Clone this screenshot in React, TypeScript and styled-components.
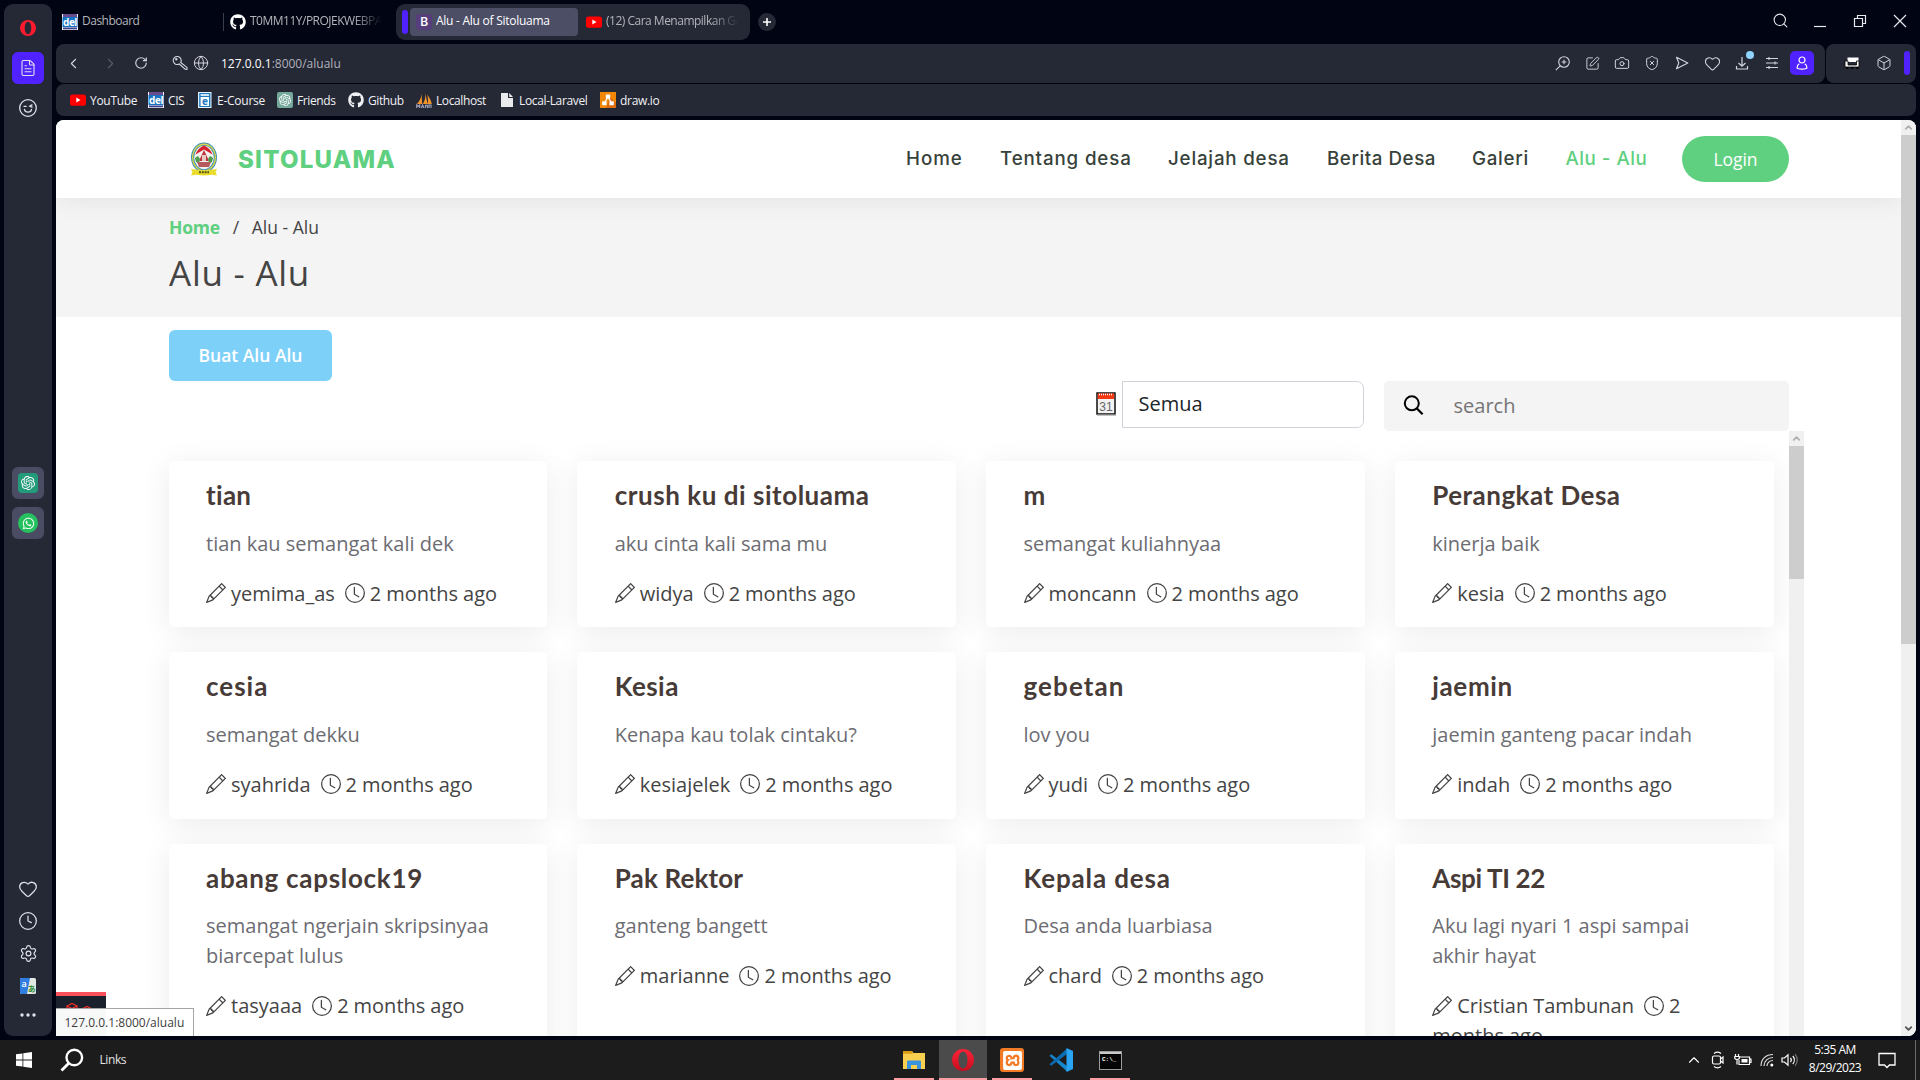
import React from 'react';
import styled, { createGlobalStyle, css } from 'styled-components';
import {
  ChevronLeft, ChevronRight, RotateCw, Globe, Search, Camera, ShieldX,
  Heart, Box, Clock, Settings, FileText, ChevronUp, ChevronDown, SquarePen,
} from 'lucide-react';
import { FaGithub, FaWhatsapp } from 'react-icons/fa';
import { BsPencil, BsClock } from 'react-icons/bs';
import { SiOpenai, SiXampp } from 'react-icons/si';

const UI = '"Open Sans", "Noto Sans", sans-serif';

const Global = createGlobalStyle`
  * { box-sizing: border-box; }
  html, body { margin: 0; padding: 0; background: #010412; }
  body { width: 1920px; height: 1080px; overflow: hidden; font-family: ${UI}; }
  svg { display: block; flex: none; }
`;

const Screen = styled.div`
  width: 1920px;
  height: 1080px;
  display: flex;
  flex-direction: column;
  background: #010412;
`;
const Desktop = styled.div`
  display: flex;
  height: 1040px;
  padding: 0 4px 4px;
`;
const Sidebar = styled.aside`
  width: 48px;
  margin: 4px 4px 0 0;
  border-radius: 9px;
  background: #252835;
  color: #dfe1ea;
  display: flex;
  flex-direction: column;
  align-items: center;
`;
const SideButton = styled.div<{ $top?: number; $bg?: string }>`
  width: 32px;
  height: 32px;
  margin-top: ${(p) => p.$top ?? 0}px;
  border-radius: 6px;
  background: ${(p) => p.$bg ?? 'transparent'};
  display: flex;
  align-items: center;
  justify-content: center;
`;
const AppBadge = styled.div<{ $bg: string; $radius: number }>`
  width: 20px;
  height: 20px;
  border-radius: ${(p) => p.$radius}px;
  background: ${(p) => p.$bg};
  color: #fff;
  display: flex;
  align-items: center;
  justify-content: center;
`;

const Browser = styled.div`
  width: 1860px;
  display: flex;
  flex-direction: column;
`;
const TabStrip = styled.div`
  height: 44px;
  display: flex;
  align-items: center;
  color: #fff;
`;
const Tab = styled.div<{ $width: number; $active?: boolean }>`
  width: ${(p) => p.$width}px;
  flex: none;
  height: 28px;
  padding: 0 6px;
  border-radius: 4px;
  display: flex;
  align-items: center;
  gap: 4px;
  font-size: 12px;
  letter-spacing: -0.5px;
  white-space: nowrap;
  color: #b4b5ba;
  ${(p) => p.$active && css`
    background: #4c4e66;
    color: #fff;
    font-weight: 500;
    letter-spacing: -0.26px;
  `}
`;
const TabText = styled.span<{ $fade?: boolean }>`
  flex: 1;
  overflow: hidden;
  line-height: 18px;
  padding-bottom: 2px;
  ${(p) => p.$fade && css`mask-image: linear-gradient(90deg, #000 78%, transparent 99%);`}
`;
const TabDivider = styled.div`
  width: 1px;
  height: 18px;
  background: #3b3d4b;
`;
const Island = styled.div`
  width: 354px;
  height: 36px;
  margin: 0 8px 0 7px;
  padding: 0 6px;
  border-radius: 9px;
  background: #252835;
  display: flex;
  align-items: center;
  gap: 2px;
`;
const Accent = styled.div`
  width: 6px;
  flex: none;
  height: 24px;
  border-radius: 3px;
  background: #4f22ff;
`;
const NewTab = styled.div`
  width: 18px;
  height: 18px;
  border-radius: 50%;
  background: #252835;
  display: flex;
  align-items: center;
  justify-content: center;
`;
const WindowControls = styled.div`
  margin: 0 -4px 3px auto;
  width: 160px;
  display: grid;
  grid-template-columns: repeat(4, 40px);
  justify-items: center;
  align-items: center;
  color: #e8e8ee;
`;
const ToolRow = styled.div`
  height: 39px;
  display: flex;
  gap: 1px;
  margin-bottom: 1px;
`;
const ToolPanel = styled.div<{ $width: number }>`
  width: ${(p) => p.$width}px;
  border-radius: 8px;
  background: #252835;
  color: #d3d5dd;
  display: flex;
  align-items: center;
  padding-bottom: 1px;
`;
const Slot = styled.div<{ $width: number; $dim?: boolean }>`
  width: ${(p) => p.$width}px;
  flex: none;
  display: flex;
  justify-content: center;
  opacity: ${(p) => (p.$dim ? 0.3 : 1)};
`;
const Url = styled.div`
  margin-left: 9px;
  font-size: 12px;
  color: #b0b2bc;
  b { font-weight: 400; color: #fff; }
`;
const Tools = styled.div`
  margin-left: auto;
  display: flex;
  align-items: center;
  margin-right: 8px;
`;
const Profile = styled.div`
  width: 24px;
  height: 24px;
  border-radius: 5px;
  background: #4f22ff;
  color: #fff;
  display: flex;
  align-items: center;
  justify-content: center;
`;
const Bookmarks = styled.div`
  height: 32px;
  margin-bottom: 4px;
  padding: 0 14px;
  border-radius: 8px;
  background: #252835;
  display: flex;
  align-items: center;
`;
const Bookmark = styled.div<{ $width: number; $track: number }>`
  width: ${(p) => p.$width}px;
  display: flex;
  align-items: center;
  gap: 4px;
  font-size: 12px;
  letter-spacing: ${(p) => p.$track}px;
  white-space: nowrap;
  color: #f0f1f4;
`;

const Viewport = styled.div`
  position: relative;
  height: 916px;
  display: flex;
  background: #fff;
  border-radius: 8px 8px 8px 0;
  overflow: hidden;
`;
const Page = styled.div`
  width: 1845px;
  display: flex;
  flex-direction: column;
  overflow: hidden;
`;
const SiteHeader = styled.header`
  position: relative;
  z-index: 1;
  flex: none;
  height: 78px;
  padding: 0 112px 0 113px;
  background: #fff;
  box-shadow: 0 2px 26px rgba(0, 0, 0, 0.07);
  display: flex;
  align-items: center;
`;
const Brand = styled.div`
  display: flex;
  align-items: center;
  gap: 20px;
  margin-left: 21px;
  font: 800 24px Inter, sans-serif;
  letter-spacing: 1.25px;
  color: #5fcf80;
`;
const Nav = styled.nav`
  margin-left: auto;
  display: flex;
  align-items: center;
  gap: 37.5px;
`;
const NavLink = styled.a<{ $width: number; $track: number; $active?: boolean }>`
  width: ${(p) => p.$width}px;
  font: 450 18.75px/28px Inter, sans-serif;
  letter-spacing: ${(p) => p.$track}px;
  white-space: nowrap;
  color: ${(p) => (p.$active ? '#5fcf80' : '#37423b')};
`;
const LoginButton = styled.button`
  width: 107px;
  height: 46px;
  margin-left: 36px;
  padding: 0 0 1px;
  border: 0;
  border-radius: 23px;
  background: #5fcf80;
  color: #fff;
  font: 450 17.5px/26px ${UI};
  letter-spacing: -0.1px;
`;
const Crumbs = styled.section`
  flex: none;
  height: 119px;
  padding: 16px 0 0 113px;
  background: #f4f4f4;
  color: #444;
`;
const CrumbLine = styled.div`
  display: flex;
  gap: 12.7px;
  font-size: 17.5px;
  line-height: 26px;
`;
const CrumbHome = styled.a`
  color: #5fcf80;
  font-weight: 700;
  letter-spacing: -0.2px;
`;
const PageTitle = styled.h2`
  margin: 12px 0 0;
  font-size: 35px;
  line-height: 42px;
  font-weight: 400;
  letter-spacing: 0.75px;
`;
const CreateButton = styled.button`
  flex: none;
  width: 163px;
  height: 51px;
  margin: 13px 0 0 113px;
  padding: 0 0 2px;
  border: 0;
  border-radius: 6px;
  background: #7dd1f9;
  color: #fff;
  font: 600 17.5px ${UI};
`;
const Filters = styled.div`
  flex: none;
  height: 50px;
  margin-right: 112px;
  display: flex;
  justify-content: flex-end;
  align-items: flex-start;
`;
const CalendarSlot = styled.div`
  margin: 10px 5px 0 0;
`;
const SelectBox = styled.div`
  width: 242px;
  height: 47px;
  padding-left: 15.5px;
  border: 1px solid #ced4da;
  border-radius: 0 7px 7px 0;
  font-size: 20px;
  line-height: 44px;
  color: #212529;
`;
const SearchBox = styled.div`
  width: 405px;
  height: 50px;
  margin-left: 20px;
  padding: 0 0 2px 19px;
  border-radius: 5px;
  background: #f4f4f4;
  display: flex;
  align-items: center;
  gap: 29.5px;
  font-size: 20px;
  color: #757575;
`;
const ListArea = styled.div`
  flex: 1;
  min-height: 0;
  margin-left: 81px;
  display: flex;
`;
const CardGrid = styled.div`
  width: 1652px;
  padding: 30px 15px 0 31.5px;
  overflow: hidden;
  display: grid;
  grid-template-columns: repeat(4, 378.75px);
  grid-template-rows: 166.25px 166.25px 240px;
  gap: 25px 30px;
`;
const Card = styled.article`
  padding: 19px 37.5px 18px;
  border-radius: 5px;
  background: #fff;
  box-shadow: 0 5px 31px rgba(0, 0, 0, 0.08);
`;
const CardTitle = styled.h3<{ $track?: number }>`
  margin: 0 0 18.5px;
  font: 700 26px/30px Lato, sans-serif;
  letter-spacing: ${(p) => p.$track ?? 0.6}px;
  white-space: nowrap;
  color: #473b38;
`;
const CardText = styled.p`
  margin: 0;
  font-size: 20px;
  line-height: 30px;
  color: #6c6c72;
`;
const CardMeta = styled.p`
  margin: 20px 0 0;
  font-size: 20px;
  line-height: 30px;
  word-spacing: -0.2px;
  color: #444;
  svg { display: inline-block; vertical-align: -2.5px; }
`;
const Scrollbar = styled.div`
  width: 15px;
  background: #f0f0f0;
  display: flex;
  flex-direction: column;
  align-items: center;
`;
const ScrollEnd = styled.div<{ $color: string }>`
  height: 15px;
  color: ${(p) => p.$color};
  display: flex;
  align-items: center;
`;
const Thumb = styled.div<{ $height: number }>`
  width: 15px;
  height: ${(p) => p.$height}px;
  margin-bottom: auto;
  background: #cdcdcd;
`;
const DebugTab = styled.div`
  position: absolute;
  left: 0;
  bottom: 0;
  width: 50px;
  height: 44px;
  padding: 6px 0 0 9px;
  border-top: 4px solid #f9505c;
  background: #1b212d;
`;
const StatusBubble = styled.div`
  position: absolute;
  left: 0;
  bottom: 0;
  width: 138px;
  height: 28px;
  padding-left: 8.5px;
  border-top: 1px solid #a5a5a5;
  border-right: 1px solid #a5a5a5;
  background: rgba(255, 255, 255, 0.97);
  font-size: 12px;
  line-height: 28px;
  color: #3c3c3c;
`;

const Taskbar = styled.footer`
  height: 40px;
  display: flex;
  background: #1c1c1c;
  color: #fff;
  font-size: 12px;
`;
const StartArea = styled.div`
  width: 890px;
  padding-left: 16px;
  display: flex;
  align-items: center;
`;
const LinksLabel = styled.span`
  margin-left: 15.500px;
  padding-bottom: 2px;
  letter-spacing: -0.4px;
  color: #e4e4e4;
`;
const TaskApp = styled.div<{ $active?: boolean }>`
  width: 48px;
  margin-right: 1px;
  background: ${(p) => (p.$active ? '#4b4b4b' : 'transparent')};
  display: flex;
  flex-direction: column;
  align-items: center;
`;
const TaskIcon = styled.div`
  height: 38px;
  padding-top: 2px;
  display: flex;
  align-items: center;
`;
const Running = styled.div<{ $width: number }>`
  width: ${(p) => p.$width}px;
  height: 2px;
  background: #ff9ea2;
`;
const Tray = styled.div`
  margin-left: auto;
  display: flex;
  align-items: center;
`;
const ClockText = styled.div`
  width: 70px;
  padding-bottom: 2px;
  text-align: center;
  line-height: 18px;
  letter-spacing: -0.5px;
`;
const DesktopEdge = styled.div`
  width: 5px;
  height: 40px;
  border-left: 1px solid #6b6b6b;
`;
const Xampp = styled.div`
  width: 24px;
  height: 24px;
  border-radius: 3px;
  background: #f47b25;
  color: #fff;
  display: flex;
  align-items: center;
  justify-content: center;
`;
const SmallBadge = styled.span`
  width: 16px;
  height: 16px;
  border-radius: 2px;
  background: #75a99c;
  color: #fff;
  display: flex;
  align-items: center;
  justify-content: center;
`;

const line = { strokeWidth: 1.5 };

const OperaO = ({ size }: { size: number }) => (
  <svg width={size} height={size} viewBox="0 0 24 24">
    <defs>
      <linearGradient id="opera" x1="0" y1="0" x2="0" y2="1">
        <stop offset="0" stopColor="#ff2238" />
        <stop offset="1" stopColor="#c40d1e" />
      </linearGradient>
    </defs>
    <path fillRule="evenodd" fill={size > 18 ? 'url(#opera)' : '#ff1b2d'} d="M12 0a12 12 0 1 0 0 24 12 12 0 0 0 0-24zM12 2.800c3 0 4.900 4.200 4.900 9.200S15 21.200 12 21.200 7.100 17 7.100 12 9 2.800 12 2.800z" />
  </svg>
);
const YouTube = () => (
  <svg width="16" height="16" viewBox="0 0 16 16">
    <rect y="2.4" width="16" height="11.4" rx="2.6" fill="#f00" />
    <path d="M6.3 5.6v5l4.2-2.5z" fill="#fff" />
  </svg>
);
const Del = () => (
  <svg width="16" height="16" viewBox="0 0 16 16">
    <rect width="16" height="16" fill="#f4f7fb" />
    <rect x="1" width="14" height="3" fill="#6a4b8c" />
    <rect x="0.5" y="3" width="15" height="10" fill="#1673c4" />
    <text x="8" y="11.8" textAnchor="middle" fontFamily="Open Sans" fontWeight="700" fontSize="10" fill="#fff">del</text>
    <rect x="1" y="13.5" width="14" height="1.8" fill="#3a3f8c" />
  </svg>
);
const Course = () => (
  <svg width="16" height="16" viewBox="0 0 16 16">
    <rect x="1" y="0" width="13.5" height="16" fill="#e6f2fb" />
    <rect x="2.2" y="1" width="11.2" height="14" fill="#1c79c0" />
    <rect x="3.6" y="2.2" width="8.4" height="1.6" fill="#fff" />
    <rect x="3.6" y="5" width="8.4" height="9" fill="#fff" />
    <text x="7.8" y="12.6" textAnchor="middle" fontFamily="Open Sans" fontWeight="700" fontSize="10" fill="#1c79c0">e</text>
  </svg>
);
const Sails = () => (
  <svg width="16" height="16" viewBox="0 0 16 16">
    <path d="M5.5 1.5C5.600 6 3.500 9 .8 12h5.400zM8.800 0c1.200 5 .2 8.500-2 12h5zM11.200 2.800c1 3.400 1 6 .6 9.200h4c-.8-3.600-2.400-6.600-4.600-9.200z" fill="#f0932b" />
    <path d="M.7 16v-3l1.500 1.500 1.500-1.500v3M5.500 16l1-3 1.500 3M9.500 16v-2.700h2v2.700M13 16v-3h2v3" fill="none" stroke="#9aa0b8" strokeWidth="1.200" />
  </svg>
);
const PageGlyph = () => (
  <svg width="16" height="16" viewBox="0 0 16 16">
    <path d="M2 1h7v5h5v9H2z" fill="#e8eaed" />
    <path d="M10.2 1L14 4.9h-3.8z" fill="#e8eaed" />
  </svg>
);
const DrawIo = () => (
  <svg width="16" height="16" viewBox="0 0 16 16">
    <rect width="16" height="16" fill="#f08705" />
    <path d="M10 5l6 6v5H6z" fill="#df6c0c" />
    <path d="M8 5L4.5 11M8 5l3.5 6" stroke="#fff" strokeWidth="1.3" />
    <rect x="5.800" y="2.400" width="4.400" height="4" rx=".5" fill="#fff" />
    <rect x="2.200" y="9.300" width="4.400" height="4" rx=".5" fill="#fff" />
    <rect x="9.400" y="9.300" width="4.400" height="4" rx=".5" fill="#fff" />
  </svg>
);
const BootstrapB = () => (
  <svg width="16" height="16" viewBox="0 0 16 16">
    <rect width="16" height="16" rx="3" fill="#563d7c" />
    <text x="8" y="12.3" textAnchor="middle" fontFamily="Inter" fontWeight="600" fontSize="12" fill="#fff">B</text>
  </svg>
);
const KeyIcon = () => (
  <svg width="16" height="16" viewBox="0 0 16 16" fill="none" stroke="currentColor" strokeWidth="1.1">
    <path d="M8.7 7.5A4 4 0 1 0 7.2 9l6 5.200 1.800.2v-2z" />
    <circle cx="4.300" cy="4.300" r=".7" />
  </svg>
);
const Wink = () => (
  <svg width="18" height="18" viewBox="0 0 18 18" fill="none" stroke="currentColor" strokeWidth="1.3" strokeLinecap="round">
    <circle cx="9" cy="9" r="8.300" />
    <path d="M5 7.300h2.200M13 5.900l-2.200 1.300 2.200 1M5.500 10.500c.6 3.600 6.400 3.600 7 0" />
  </svg>
);
const Translate = () => (
  <svg width="16" height="16" viewBox="0 0 16 16">
    <rect width="16" height="16" rx="1.500" fill="#e4e8e4" />
    <path d="M1.500 0H10L7 16H1.500A1.500 1.500 0 0 1 0 14.500v-13A1.500 1.500 0 0 1 1.500 0z" fill="#2f7de1" />
    <text x="4" y="8.500" textAnchor="middle" fontFamily="Open Sans" fontWeight="600" fontSize="9" fill="#fff">a</text>
    <text x="11.700" y="14" textAnchor="middle" fontFamily="Noto Sans CJK JP" fontWeight="700" fontSize="8" fill="#2e8b34">あ</text>
  </svg>
);
const Dots = () => (
  <svg width="16" height="4" viewBox="0 0 16 4" fill="currentColor">
    <circle cx="2" cy="2" r="1.700" /><circle cx="8" cy="2" r="1.700" /><circle cx="14" cy="2" r="1.700" />
  </svg>
);
const Plus = () => (
  <svg width="8" height="8" viewBox="0 0 8 8"><path d="M4 0v8M0 4h8" stroke="#fff" strokeWidth="1.600" /></svg>
);
const ZoomPlus = () => (
  <svg width="15" height="15" viewBox="0 0 15 15" fill="none" stroke="currentColor" strokeWidth="1.100">
    <circle cx="9" cy="6" r="5.300" />
    <path d="M5.200 9.800L.8 14.200M9 3.700v4.600M6.700 6h4.600" />
  </svg>
);
const SendIcon = () => (
  <svg width="14" height="14" viewBox="0 0 14 14" fill="none" stroke="currentColor" strokeWidth="1.100" strokeLinejoin="round">
    <path d="M1.500 1.200L12.800 7 1.500 12.800 3.800 7z" />
  </svg>
);
const EasyIcon = () => (
  <svg width="14" height="14" viewBox="0 0 14 14" stroke="currentColor" strokeWidth="1.100">
    <path d="M1 2.500h12M1 7h12M1 11.500h12M4 1v3M10 5.500v3M4 10v3" />
  </svg>
);
const Person = () => (
  <svg width="14" height="14" viewBox="0 0 14 14" fill="none" stroke="currentColor" strokeWidth="1.200">
    <circle cx="7" cy="4" r="3" />
    <path d="M4.300 7.800C2.400 8.800 2 10.300 2.200 12.300c2.600 1 7 1 9.600 0 .2-2-.2-3.500-2.100-4.500" />
  </svg>
);
const Couch = () => (
  <svg width="16" height="14" viewBox="0 0 16 14">
    <path d="M3.500 1.500h11v4.500h-11z" fill="#fff" />
    <path d="M1 5h3v4h8.500V5h2.500v6H1z" fill="#fff" stroke="#000" strokeWidth=".8" />
    <path d="M2 12h2.500M7 12h2.500M12 12h2.500" stroke="#000" strokeWidth="1.500" />
  </svg>
);
const DownloadBadge = () => (
  <svg width="24" height="24" viewBox="0 0 24 24" fill="none" stroke="currentColor" strokeWidth="1.200">
    <path d="M12 6v9M8.500 12l3.500 3.300 3.500-3.300M6.500 15v3h11v-3" />
    <circle cx="20" cy="4" r="4" fill="#8fd3ff" stroke="none" />
  </svg>
);
const Restore = () => (
  <svg width="14" height="14" viewBox="0 0 14 14" fill="none" stroke="currentColor" strokeWidth="1.200">
    <path d="M1.500 4.500h8v8h-8zM4.500 4.500v-3h8v8h-3" />
  </svg>
);
const Minimize = () => (
  <svg width="12" height="14" viewBox="0 0 12 14"><path d="M0 12.500h12" stroke="currentColor" strokeWidth="1.200" /></svg>
);
const CloseIcon = () => (
  <svg width="14" height="14" viewBox="0 0 14 14"><path d="M1 1l12 12M13 1L1 13" stroke="currentColor" strokeWidth="1.200" /></svg>
);
const Crest = () => (
  <svg width="28" height="34" viewBox="0 0 28 34">
    <ellipse cx="14" cy="15.500" rx="13" ry="15" fill="#3a8fb5" />
    <ellipse cx="14" cy="15.500" rx="11.300" ry="13.300" fill="none" stroke="#d9d44a" strokeWidth="1.400" />
    <ellipse cx="14" cy="15.500" rx="9.800" ry="11.800" fill="#f3f1ee" />
    <path d="M5.500 12.500C7 8 10 5 14 3.500c4 1.500 7 4.500 8.500 9L14 7.500z" fill="#d5222c" />
    <path d="M14 8l5 11H9z" fill="#b9343a" />
    <path d="M5 16l3-2 2 3-1 4-3-1zM23 16l-3-2-2 3 1 4 3-1z" fill="#4d9b4b" />
    <path d="M12 13h4v6h-4z" fill="#e8c9c4" />
    <path d="M7 20h14l-2 5H9z" fill="#b55a5e" />
    <path d="M1 27l4 .5c6 1.500 12 1.500 18 0l4-.5-1.500 3 1.500 3.500-5-.8c-5 1-11 1-16 0l-5 .8L2.500 30z" fill="#e9dc2b" />
    <path d="M9 30.300h10" stroke="#55501a" strokeWidth="2" strokeDasharray="2 .8" />
  </svg>
);
const Calendar = () => (
  <svg width="21" height="25" viewBox="0 0 21 25">
    <rect x="1" y="2" width="18" height="21" fill="#f2f2f2" stroke="#111" strokeWidth="1.500" />
    <rect x="1.800" y="2.500" width="16.400" height="5.500" fill="#f5380f" />
    <path d="M3 3.500h14" stroke="#fff" strokeWidth="1.500" strokeDasharray="1 1" />
    <path d="M1 24h19" stroke="#999" strokeWidth="1.200" />
    <text x="10" y="19.800" textAnchor="middle" fontFamily="Liberation Sans" fontSize="12" fill="#666">31</text>
  </svg>
);
const Magnifier = () => (
  <svg width="21" height="21" viewBox="0 0 21 21" fill="none" stroke="#000" strokeWidth="2">
    <circle cx="8.800" cy="8.300" r="7" />
    <path d="M13.600 13.200l6 6" strokeWidth="2.300" />
  </svg>
);
const Cubes = () => (
  <svg width="30" height="28" viewBox="0 0 30 28" fill="none" stroke="#f0302a" strokeWidth="1.200">
    <path d="M2 4l5-2.500L12 4 7 6.500zM2 4v10l5 3V6.500M12 4v6M17 7l5-2.500L27 7l-5 2.500zM17 7v6l5 3V9.500" />
  </svg>
);
const WindowsLogo = () => (
  <svg width="16" height="16" viewBox="0 0 16 16" fill="#fff">
    <path d="M0 2.300l6.500-.9v6.200H0zM7.300 1.300L16 0v7.600H7.300zM0 8.400h6.500v6.200L0 13.700zM7.300 8.400H16V16l-8.700-1.300z" />
  </svg>
);
const TaskSearch = () => (
  <svg width="24" height="24" viewBox="0 0 24 24" fill="none" stroke="#fff" strokeWidth="2.400">
    <circle cx="14.300" cy="9.500" r="7.800" />
    <path d="M8.500 15.500l-7 7" strokeWidth="2.800" />
  </svg>
);
const Explorer = () => (
  <svg width="22" height="20" viewBox="0 0 22 20">
    <path d="M0 1h9l1.500 2H22v16H0z" fill="#f9cf50" />
    <path d="M0 1h9l1 2-1 .8H0z" fill="#d99b12" />
    <path d="M4 19v-7.500q0-1 1-1h12q1 0 1 1V19h-4v-4H8v4z" fill="#3993dd" />
  </svg>
);
const Code = () => (
  <svg width="24" height="24" viewBox="0 0 24 24">
    <path d="M.5 7.800L2.200 6.300 18 18v5.500z" fill="#1587cf" />
    <path d="M.5 16.200l1.700 1.500L18 6V.5z" fill="#0a6cb2" />
    <path d="M17.500 0L24 3v18l-6.500 3z" fill="#2aa4f2" />
  </svg>
);
const Cmd = () => (
  <svg width="23" height="19" viewBox="0 0 23 19">
    <rect x=".5" y=".5" width="22" height="18" fill="#050505" stroke="#9b9b9b" />
    <rect x="1" y="1" width="21" height="2" fill="#c9c9c9" />
    <text x="3" y="9.500" fontFamily="Liberation Mono" fontWeight="700" fontSize="6" fill="#fff">C:\_</text>
  </svg>
);
const Meet = () => (
  <svg width="14" height="18" viewBox="0 0 14 18" fill="none" stroke="#fff" strokeWidth="1.200">
    <rect x="1.500" y="5" width="8" height="8" rx="1.500" />
    <path d="M9.500 8l2.500-2v6l-2.500-2M3 2.500c2-1.500 5-1.500 7 0M3 15.500c2 1.500 5 1.500 7 0" />
  </svg>
);
const Battery = () => (
  <svg width="18" height="14" viewBox="0 0 18 14" fill="none" stroke="#fff" strokeWidth="1.200">
    <path d="M6 4h9.500v7.500H5V7M15.500 6h1.500v3.500h-1.500" />
    <rect x="7.500" y="6" width="6" height="3.500" fill="#fff" stroke="none" />
    <path d="M1.500 1v2M4.500 1v2M.8 3.500h4.500v2L3 7 .8 5.500zM3 7v4.500" />
  </svg>
);
const Wifi = () => (
  <svg width="14" height="14" viewBox="0 0 14 14" fill="none" stroke="#ddd" strokeWidth="1.200">
    <path d="M1 13C1 6 6 1.500 13 1.500M4 13c0-5 4-8.500 9-8.500M7 13c0-3 2.500-5.500 6-5.500" />
    <circle cx="11.800" cy="12" r="1.500" fill="#fff" stroke="none" />
  </svg>
);
const Speaker = () => (
  <svg width="18" height="14" viewBox="0 0 18 14" fill="none" stroke="#fff" strokeWidth="1.200">
    <path d="M1 5h2.500L7 1.800v10.400L3.500 9H1z" />
    <path d="M9.500 5c1 1.200 1 2.800 0 4M11.800 3c2 2.300 2 5.700 0 8" />
    <path d="M14 1.200c3 3.400 3 8.200 0 11.600" stroke="#777" />
  </svg>
);
const Notice = () => (
  <svg width="18" height="17" viewBox="0 0 18 17" fill="none" stroke="#fff" strokeWidth="1.300">
    <path d="M1 1.500h16v11.500h-5.500L9 15.500 6.500 13H1z" />
  </svg>
);

const bookmarks: [React.ReactNode, string, number, number][] = [
  [<YouTube />, 'YouTube', 78, -0.3],
  [<Del />, 'CIS', 49, -0.4],
  [<Course />, 'E-Course', 80, -0.25],
  [<SmallBadge><SiOpenai size={12} /></SmallBadge>, 'Friends', 71, -0.4],
  [<FaGithub size={16} />, 'Github', 68, -0.4],
  [<Sails />, 'Localhost', 83, -0.4],
  [<PageGlyph />, 'Local-Laravel', 101, -0.35],
  [<DrawIo />, 'draw.io', 58, -0.3],
];

const links: [string, number, number][] = [
  ['Home', 56.5, 0.95],
  ['Tentang desa', 130.5, 0.85],
  ['Jelajah desa', 121.5, 0.8],
  ['Berita Desa', 107.5, 0.55],
  ['Galeri', 56, 0.7],
  ['Alu - Alu', 80.5, 0.5],
];

const cards: { title: string; text: string; author: string; track?: number }[] = [
  { title: 'tian', text: 'tian kau semangat kali dek', author: 'yemima_as', track: 0.3 },
  { title: 'crush ku di sitoluama', text: 'aku cinta kali sama mu', author: 'widya', track: 0.53 },
  { title: 'm', text: 'semangat kuliahnyaa', author: 'moncann' },
  { title: 'Perangkat Desa', text: 'kinerja baik', author: 'kesia', track: 0.48 },
  { title: 'cesia', text: 'semangat dekku', author: 'syahrida', track: 1 },
  { title: 'Kesia', text: 'Kenapa kau tolak cintaku?', author: 'kesiajelek', track: 0.4 },
  { title: 'gebetan', text: 'lov you', author: 'yudi', track: 1.1 },
  { title: 'jaemin', text: 'jaemin ganteng pacar indah', author: 'indah', track: 0.65 },
  { title: 'abang capslock19', text: 'semangat ngerjain skripsinyaa biarcepat lulus', author: 'tasyaaa', track: 0.7 },
  { title: 'Pak Rektor', text: 'ganteng bangett', author: 'marianne', track: 0.15 },
  { title: 'Kepala desa', text: 'Desa anda luarbiasa', author: 'chard', track: 0.85 },
  { title: 'Aspi TI 22', text: 'Aku lagi nyari 1 aspi sampai akhir hayat', author: 'Cristian Tambunan', track: -0.35 },
];

export default function App() {
  return (
    <Screen>
      <Global />
      <Desktop>
        <Sidebar>
          <SideButton $top={8}><OperaO size={16} /></SideButton>
          <SideButton $top={8} $bg="#4f22ff"><FileText size={18} {...line} /></SideButton>
          <SideButton $top={8}><Wink /></SideButton>
          <SideButton $top={343} $bg="#4a4c63">
            <AppBadge $bg="#229b7b" $radius={4}><SiOpenai size={14} /></AppBadge>
          </SideButton>
          <SideButton $top={8} $bg="#4a4c63">
            <AppBadge $bg="#25c15f" $radius={10}><FaWhatsapp size={13} /></AppBadge>
          </SideButton>
          <SideButton $top={334}><Heart size={20} {...line} /></SideButton>
          <SideButton><Clock size={20} {...line} /></SideButton>
          <SideButton><Settings size={19} {...line} /></SideButton>
          <SideButton $top={1}><Translate /></SideButton>
          <SideButton $top={-3}><Dots /></SideButton>
        </Sidebar>
        <Browser>
          <TabStrip>
            <Tab $width={167}><Del /><TabText>Dashboard</TabText></Tab>
            <TabDivider />
            <Tab $width={165}><FaGithub size={16} color="#fff" /><TabText $fade>T0MM11Y/PROJEKWEBPA</TabText></Tab>
            <Island>
              <Accent />
              <Tab $width={168} $active><BootstrapB /><TabText>Alu - Alu of Sitoluama</TabText></Tab>
              <Tab $width={166}><YouTube /><TabText $fade>(12) Cara Menampilkan Ga</TabText></Tab>
            </Island>
            <NewTab><Plus /></NewTab>
            <WindowControls>
              <Search size={17} {...line} />
              <Minimize />
              <Restore />
              <CloseIcon />
            </WindowControls>
          </TabStrip>
          <ToolRow>
            <ToolPanel $width={1769}>
              <Slot $width={34}><ChevronLeft size={17} {...line} /></Slot>
              <Slot $width={40} $dim><ChevronRight size={17} {...line} /></Slot>
              <Slot $width={22}><RotateCw size={14} strokeWidth={2} /></Slot>
              <Slot $width={17} />
              <Slot $width={21}><KeyIcon /></Slot>
              <Slot $width={22}><Globe size={16} {...line} /></Slot>
              <Url><b>127.0.0.1</b>:8000/alualu</Url>
              <Tools>
                <Slot $width={30}><ZoomPlus /></Slot>
                <Slot $width={30}><SquarePen size={15} {...line} /></Slot>
                <Slot $width={30}><Camera size={16} {...line} /></Slot>
                <Slot $width={30}><ShieldX size={16} {...line} /></Slot>
                <Slot $width={30}><SendIcon /></Slot>
                <Slot $width={30}><Heart size={17} {...line} /></Slot>
                <Slot $width={30}><DownloadBadge /></Slot>
                <Slot $width={30}><EasyIcon /></Slot>
                <Slot $width={30}><Profile><Person /></Profile></Slot>
              </Tools>
            </ToolPanel>
            <ToolPanel $width={90}>
              <Slot $width={52}><Couch /></Slot>
              <Slot $width={12}><Box size={16} {...line} /></Slot>
              <Slot $width={14} />
              <Accent />
            </ToolPanel>
          </ToolRow>
          <Bookmarks>
            {bookmarks.map(([icon, label, w, track]) => (
              <Bookmark key={label} $width={w} $track={track}>{icon}{label}</Bookmark>
            ))}
          </Bookmarks>
          <Viewport>
            <Page>
              <SiteHeader>
                <Brand><Crest />SITOLUAMA</Brand>
                <Nav>
                  {links.map(([label, w, track], i) => (
                    <NavLink key={label} $width={w} $track={track} $active={i === 5}>{label}</NavLink>
                  ))}
                </Nav>
                <LoginButton>Login</LoginButton>
              </SiteHeader>
              <Crumbs>
                <CrumbLine><CrumbHome>Home</CrumbHome><span>/</span><span>Alu - Alu</span></CrumbLine>
                <PageTitle>Alu - Alu</PageTitle>
              </Crumbs>
              <CreateButton>Buat Alu Alu</CreateButton>
              <Filters>
                <CalendarSlot><Calendar /></CalendarSlot>
                <SelectBox>Semua</SelectBox>
                <SearchBox><Magnifier />search</SearchBox>
              </Filters>
              <ListArea>
                <CardGrid>
                  {cards.map((c) => (
                    <Card key={c.title}>
                      <CardTitle $track={c.track}>{c.title}</CardTitle>
                      <CardText>{c.text}</CardText>
                      <CardMeta>
                        <BsPencil size={20} /> {c.author}&nbsp; <BsClock size={20} /> 2 months ago
                      </CardMeta>
                    </Card>
                  ))}
                </CardGrid>
                <Scrollbar>
                  <ScrollEnd $color="#b0b0b0"><ChevronUp size={11} strokeWidth={4} /></ScrollEnd>
                  <Thumb $height={133} />
                </Scrollbar>
              </ListArea>
            </Page>
            <Scrollbar>
              <ScrollEnd $color="#b0b0b0"><ChevronUp size={11} strokeWidth={4} /></ScrollEnd>
              <Thumb $height={509} />
              <ScrollEnd $color="#555"><ChevronDown size={11} strokeWidth={4} /></ScrollEnd>
            </Scrollbar>
            <DebugTab><Cubes /></DebugTab>
            <StatusBubble>127.0.0.1:8000/alualu</StatusBubble>
          </Viewport>
        </Browser>
      </Desktop>
      <Taskbar>
        <StartArea>
          <WindowsLogo />
          <Slot $width={28} />
          <TaskSearch />
          <LinksLabel>Links</LinksLabel>
        </StartArea>
        <TaskApp><TaskIcon><Explorer /></TaskIcon><Running $width={40} /></TaskApp>
        <TaskApp $active><TaskIcon><OperaO size={22} /></TaskIcon><Running $width={48} /></TaskApp>
        <TaskApp><TaskIcon><Xampp><SiXampp size={19} /></Xampp></TaskIcon><Running $width={40} /></TaskApp>
        <TaskApp><TaskIcon><Code /></TaskIcon></TaskApp>
        <TaskApp><TaskIcon><Cmd /></TaskIcon><Running $width={40} /></TaskApp>
        <Tray>
          <Slot $width={24}><ChevronUp size={18} {...line} /></Slot>
          <Slot $width={24}><Meet /></Slot>
          <Slot $width={25}><Battery /></Slot>
          <Slot $width={24}><Wifi /></Slot>
          <Slot $width={21}><Speaker /></Slot>
          <ClockText>5:35 AM<br />8/29/2023</ClockText>
          <Slot $width={34}><Notice /></Slot>
          <Slot $width={11} />
          <DesktopEdge />
        </Tray>
      </Taskbar>
    </Screen>
  );
}
